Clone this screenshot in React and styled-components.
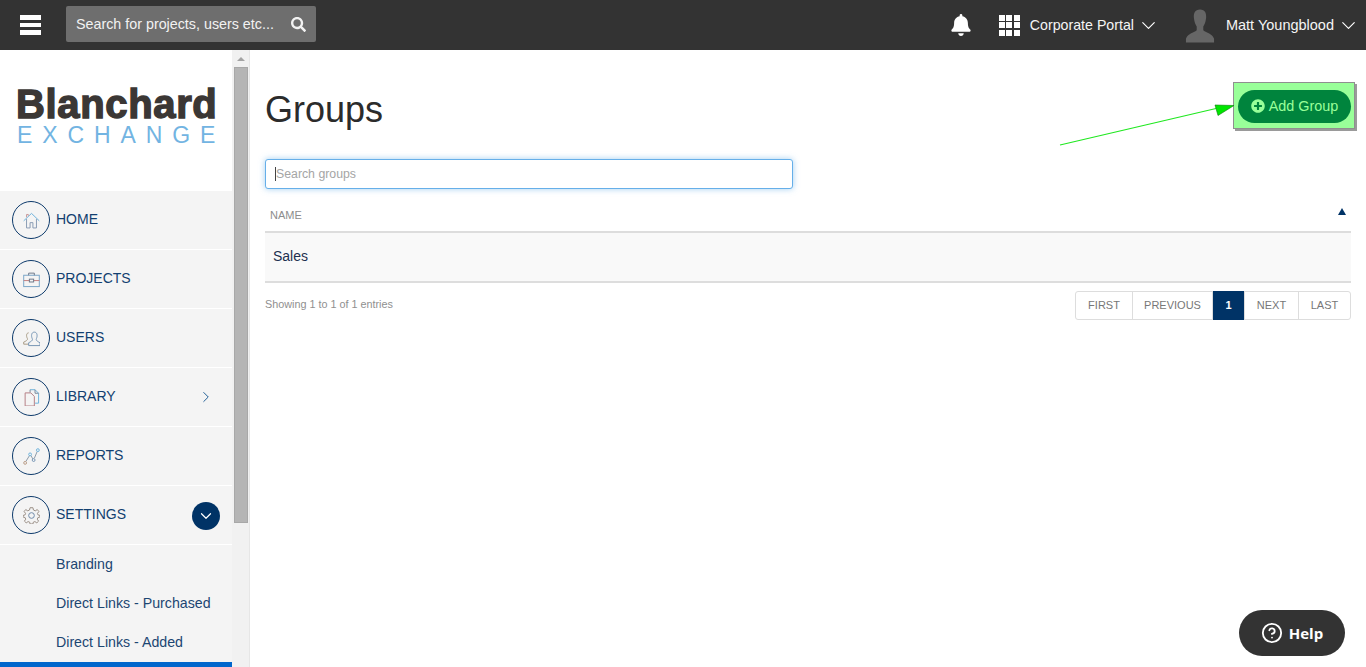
import React from 'react'
import styled, { createGlobalStyle } from 'styled-components'
import { FaSearch, FaBell, FaPlusCircle } from 'react-icons/fa'
import { ChevronDown, ChevronRight, CircleHelp } from 'lucide-react'

const menu = [
  {
    label: 'HOME',
    icon: (
      <>
        <path d="M1 12.500 L12 2 L23 12.500" stroke="#6fb3dc" />
        <path d="M5 10 V22.500 H10 V15 H14 V22.500 H19 V10" stroke="#8a9cb4" />
        <path d="M5 7.500 V3.500 H7.500 V5.500" stroke="#c99a9a" />
      </>
    ),
  },
  {
    label: 'PROJECTS',
    icon: (
      <>
        <rect x="1" y="6" width="22" height="16" stroke="#7aa6c8" />
        <path d="M8 6 V3 H16 V6" stroke="#6f7a8c" />
        <path d="M1 13.500 H9 M15 13.500 H23" stroke="#c47f7f" />
        <rect x="9" y="11.500" width="6" height="4" stroke="#6f7a8c" />
      </>
    ),
  },
  {
    label: 'USERS',
    icon: (
      <>
        <path d="M8 4 C4.500 4 4.500 9 6 11.500 C7 13.500 6 15 1 17 V20 H8" stroke="#a89c86" />
        <path d="M16 3 C11.500 3 11.500 9 13 12 C14 14 13 15.500 8 18 V22 H24 V18 C19 15.500 18 14 19 12 C20.500 9 20.500 3 16 3 Z" stroke="#7796b4" />
      </>
    ),
  },
  {
    label: 'LIBRARY',
    arrow: 'right',
    icon: (
      <>
        <path d="M10 1 H17 L22 6 V20 H17" stroke="#6fb3dc" />
        <path d="M10 1 V5 M17 1 V6 H22" stroke="#7a8a9c" />
        <path d="M3 5.500 H11 L16 10.500 V24 H3 Z" stroke="#b57f86" />
      </>
    ),
  },
  {
    label: 'REPORTS',
    icon: (
      <>
        <path d="M4 19 L9 11 M11 10.500 L14 15.500 M16 14.500 L20 5" stroke="#8c9aa8" />
        <circle cx="3" cy="21" r="2" stroke="#b89c86" />
        <circle cx="10" cy="9" r="2" stroke="#6fb3dc" />
        <circle cx="15" cy="17" r="2" stroke="#7796b4" />
        <circle cx="21" cy="3" r="2" stroke="#6fb3dc" />
      </>
    ),
  },
  {
    label: 'SETTINGS',
    arrow: 'down',
    icon: (
      <>
        <circle cx="12" cy="12" r="4" stroke="#6f8aa8" />
        <path
          d="M10 1 H14 L14.800 4.300 L17.300 5.400 L20.200 3.600 L22.400 6.400 L20.400 9 L21 11 L24 12 V14 L21 15 L20.200 17.200 L22 20 L19.500 22.400 L16.800 20.600 L14.600 21.400 L14 24 H10 L9.400 21.400 L7.200 20.600 L4.500 22.400 L2 20 L3.800 17.200 L3 15 L0 14 V12 L3 11 L3.600 9 L1.600 6.400 L3.800 3.600 L6.700 5.400 L9.200 4.300 Z"
          stroke="#9a8f86"
        />
      </>
    ),
  },
]

const subMenu = ['Branding', 'Direct Links - Purchased', 'Direct Links - Added']
const pages = [
  { label: 'FIRST', width: 57 },
  { label: 'PREVIOUS', width: 80 },
  { label: '1', width: 32 },
  { label: 'NEXT', width: 54 },
  { label: 'LAST', width: 51 },
]

export default function App() {
  return (
    <Page>
      <GlobalStyle />
      <TopBar>
        <Burger>
          <span />
          <span />
          <span />
        </Burger>
        <SearchBox>
          <span>Search for projects, users etc...</span>
          <FaSearch size={15} />
        </SearchBox>
        <TopRight>
          <BellWrap>
            <FaBell size={22} />
          </BellWrap>
          <AppGrid>
            {Array.from({ length: 9 }).map((_, i) => (
              <i key={i} />
            ))}
          </AppGrid>
          <TopLabel $size={14.2}>Corporate Portal</TopLabel>
          <TopChevron>
            <ChevronDown size={23} strokeWidth={1.2} />
          </TopChevron>
          <Avatar viewBox="0 0 32 36">
            <path d="M16 1 C10.500 1 9 5 9.500 10 C10 14 11 17 12.500 19 V23 C9 26 3 26.500 1 32 V36 H31 V32 C29 26.500 23 26 19.500 23 V19 C21 17 22 14 22.500 10 C23 5 21.500 1 16 1 Z" fill="#666" />
          </Avatar>
          <TopLabel $size={14.5}>Matt Youngblood</TopLabel>
          <TopChevron>
            <ChevronDown size={23} strokeWidth={1.2} />
          </TopChevron>
        </TopRight>
      </TopBar>

      <Body>
        <Sidebar>
          <Logo>
            <LogoTop>Blanchard</LogoTop>
            <LogoBottom>EXCHANGE</LogoBottom>
          </Logo>
          <Menu>
            {menu.map((item) => (
              <MenuRow key={item.label}>
                <Circle>
                  <svg viewBox="0 0 24 24" width="17" height="17" fill="none" strokeWidth="1.4">
                    {item.icon}
                  </svg>
                </Circle>
                <MenuLabel>{item.label}</MenuLabel>
                {item.arrow === 'right' && (
                  <RightArrow>
                    <ChevronRight size={18} strokeWidth={1.3} />
                  </RightArrow>
                )}
                {item.arrow === 'down' && (
                  <DownArrow>
                    <ChevronDown size={18} strokeWidth={1.6} />
                  </DownArrow>
                )}
              </MenuRow>
            ))}
            {subMenu.map((item) => (
              <SubRow key={item}>{item}</SubRow>
            ))}
            <SubRow $active />
          </Menu>
        </Sidebar>
        <Scrollbar>
          <ScrollUp />
          <ScrollThumb />
        </Scrollbar>

        <Main>
          <TitleRow>
            <Title>Groups</Title>
            <Highlight>
              <ArrowLine viewBox="0 0 180 45" width="180" height="45">
                <path d="M0 44 L156 7.500" stroke="#1fe81f" strokeWidth="1.1" fill="none" />
                <path d="M155 4 L174 4.500 L158 14.500 Z" fill="#00e600" stroke="#0a7a0a" strokeWidth="0.6" />
              </ArrowLine>
              <AddButton>
                <FaPlusCircle size={14} />
                <span>Add Group</span>
              </AddButton>
            </Highlight>
          </TitleRow>

          <SearchWrap>
            <SearchInput placeholder="Search groups" />
            <Caret />
          </SearchWrap>

          <TableHead>
            <span>NAME</span>
            <SortArrow />
          </TableHead>
          <TableRow>Sales</TableRow>

          <Footer>
            <Showing>Showing 1 to 1 of 1 entries</Showing>
            <Pager>
              {pages.map((p) => (
                <PageItem key={p.label} $width={p.width} $active={p.label === '1'}>
                  {p.label}
                </PageItem>
              ))}
            </Pager>
          </Footer>
        </Main>
      </Body>

      <HelpButton>
        <CircleHelp size={22} strokeWidth={2} />
        Help
      </HelpButton>
    </Page>
  )
}

const GlobalStyle = createGlobalStyle`
  html, body {
    margin: 0;
    height: 100%;
    overflow: hidden;
    background: #fff;
    font-family: "Liberation Sans", Arial, sans-serif;
  }
  * {
    box-sizing: border-box;
  }
`

const Page = styled.div`
  width: 1366px;
  height: 667px;
  display: flex;
  flex-direction: column;
  overflow: hidden;
  position: relative;
`

const TopBar = styled.header`
  height: 50px;
  flex: none;
  background: #333;
  display: flex;
  align-items: center;
  color: #fff;
  padding-left: 20px;
`

const Burger = styled.div`
  width: 21px;
  display: flex;
  flex-direction: column;
  gap: 3px;
  margin-right: 25px;

  & span {
    height: 4.67px;
    background: #fff;
  }
`

const SearchBox = styled.div`
  width: 250px;
  height: 36px;
  margin-top: -2px;
  background: #6e6e6e;
  border-radius: 2px;
  display: flex;
  align-items: center;
  justify-content: space-between;
  padding: 0 10px;
  font-size: 14.3px;
  color: #f2f2f2;
`

const TopRight = styled.div`
  margin-left: auto;
  display: flex;
  align-items: center;
  padding-right: 11px;
`

const BellWrap = styled.div`
  display: flex;
  margin-right: 27px;
`

const AppGrid = styled.div`
  width: 21px;
  height: 21px;
  display: grid;
  grid-template-columns: repeat(3, 1fr);
  grid-template-rows: repeat(3, 1fr);
  gap: 1.5px;
  margin-right: 10px;

  & i {
    background: #fff;
  }
`

const TopLabel = styled.span`
  margin-right: 8px;
  font-size: ${(p) => p.$size}px;
  color: #f5f5f5;
  white-space: nowrap;
`

const TopChevron = styled.span`
  width: 13px;
  height: 14px;
  display: flex;
  align-items: center;
  justify-content: center;

  & svg {
    flex: none;
  }
`

const Avatar = styled.svg`
  width: 30px;
  height: 35px;
  margin: 0 11px 0 30px;
`

const Body = styled.div`
  flex: 1;
  display: flex;
  min-height: 0;
`

const Sidebar = styled.aside`
  width: 232px;
  flex: none;
  display: flex;
  flex-direction: column;
  overflow: hidden;
`

const Logo = styled.div`
  height: 141px;
  flex: none;
  padding: 35px 0 0 16px;
  background: #fff;
`

const LogoTop = styled.div`
  font-size: 40px;
  line-height: 39px;
  font-weight: 700;
  letter-spacing: 0.65px;
  color: #3b3735;
  -webkit-text-stroke: 1.4px #3b3735;
`

const LogoBottom = styled.div`
  font-size: 23px;
  line-height: 22px;
  letter-spacing: 9.9px;
  color: #72b4e2;
  margin: 0 0 0 1px;
  white-space: nowrap;
`

const Menu = styled.nav`
  flex: 1;
  background: #f4f4f4;
`

const MenuRow = styled.div`
  height: 59px;
  display: flex;
  align-items: center;
  padding-left: 12px;
  border-bottom: 1px solid #fff;
  position: relative;
`

const Circle = styled.div`
  width: 38px;
  height: 38px;
  flex: none;
  border: 1.2px solid #0d3a6b;
  border-radius: 50%;
  display: flex;
  align-items: center;
  justify-content: center;
  background: #f4f4f4;
`

const MenuLabel = styled.span`
  margin: -2px 0 0 6px;
  font-size: 14px;
  color: #123f70;
`

const RightArrow = styled.span`
  display: flex;
  color: #1c5c94;
  margin-left: auto;
  margin-right: 17px;
`

const DownArrow = styled.span`
  width: 28px;
  height: 28px;
  border-radius: 50%;
  background: #003366;
  color: #fff;
  display: flex;
  align-items: center;
  justify-content: center;
  margin-left: auto;
  margin-right: 12px;
  margin-top: 2px;
`

const SubRow = styled.div`
  height: 39px;
  display: flex;
  align-items: center;
  padding: 0 0 2px 56px;
  font-size: 14.2px;
  color: #1c4672;
  background: ${(p) => (p.$active ? '#0066cc' : 'transparent')};
`

const Scrollbar = styled.div`
  width: 18px;
  flex: none;
  background: #f1f1f1;
  border-right: 1px solid #e6e6e6;
  display: flex;
  flex-direction: column;
  align-items: flex-start;
  padding: 7px 0 0 2px;
`

const ScrollUp = styled.div`
  margin-left: 3px;
  width: 0;
  height: 0;
  border-left: 4px solid transparent;
  border-right: 4px solid transparent;
  border-bottom: 4px solid #a3a3a3;
  margin-bottom: 6px;
`

const ScrollThumb = styled.div`
  width: 14px;
  height: 456px;
  background: #b5b5b5;
  border: 1px solid #a8a8a8;
`

const Main = styled.main`
  flex: 1;
  min-width: 0;
  padding: 32px 15px 0;
`

const TitleRow = styled.div`
  display: flex;
  justify-content: space-between;
  align-items: flex-start;
  margin-bottom: 30px;
`

const Title = styled.h1`
  margin: 9px 0 0;
  font-size: 36px;
  line-height: 38px;
  font-weight: 400;
  color: #2b2b2b;
`

const Highlight = styled.div`
  position: relative;
  height: 47px;
  margin-right: -4px;
  padding: 7px 3px 0 4px;
  background: #99ff99;
  border: 1px solid #8f8f8f;
  box-shadow: 2px 2px 0 #9a9a9a;
`

const ArrowLine = styled.svg`
  position: absolute;
  left: -174px;
  top: 18px;
  overflow: visible;
`

const AddButton = styled.button`
  height: 33px;
  width: 113px;
  border: 0;
  border-radius: 17px;
  background: #00843d;
  color: #99ff99;
  font-family: inherit;
  font-size: 14.4px;
  display: flex;
  align-items: center;
  justify-content: center;
  gap: 4px;
  padding: 0 0 2px;
`

const SearchWrap = styled.div`
  position: relative;
  width: 528px;
`

const SearchInput = styled.input`
  display: block;
  width: 100%;
  height: 30px;
  padding: 0 10px;
  border: 1px solid #66afe9;
  border-radius: 3px;
  outline: none;
  box-shadow: 0 0 6px rgba(102, 175, 233, 0.6);
  font-family: inherit;
  font-size: 12.3px;
  color: #333;

  &::placeholder {
    color: #a5a5a5;
    opacity: 1;
  }
`

const Caret = styled.i`
  position: absolute;
  left: 10px;
  top: 8px;
  width: 1px;
  height: 14px;
  background: #444;
`

const TableHead = styled.div`
  height: 45px;
  margin-top: -1px;
  display: flex;
  justify-content: space-between;
  align-items: center;
  padding: 10px 5px 0;
  font-size: 11px;
  color: #8d8d8d;
  border-bottom: 2px solid #ddd;
`

const SortArrow = styled.i`
  width: 0;
  height: 0;
  margin-top: -6px;
  border-left: 4.5px solid transparent;
  border-right: 4.5px solid transparent;
  border-bottom: 7px solid #003366;
`

const TableRow = styled.div`
  height: 50px;
  display: flex;
  align-items: center;
  padding: 0 0 2px 8px;
  background: #f9f9f9;
  border-bottom: 2px solid #ddd;
  font-size: 14px;
  color: #1d3050;
`

const Footer = styled.div`
  display: flex;
  justify-content: space-between;
  align-items: flex-start;
  margin-top: 8px;
`

const Showing = styled.span`
  font-size: 10.8px;
  line-height: 13px;
  margin-top: 7px;
  color: #8f8f8f;
`

const Pager = styled.ul`
  display: flex;
  margin: 0;
  padding: 0;
  list-style: none;
  height: 29px;
  border: 1px solid #ddd;
  border-radius: 3px;
`

const PageItem = styled.li`
  width: ${(p) => p.$width}px;
  display: flex;
  align-items: center;
  justify-content: center;
  margin: ${(p) => (p.$active ? '-1px 0' : '0')};
  padding-bottom: 2px;
  font-size: 11px;
  font-weight: ${(p) => (p.$active ? 700 : 400)};
  color: ${(p) => (p.$active ? '#fff' : '#777')};
  background: ${(p) => (p.$active ? '#003366' : 'transparent')};
  border-right: 1px solid #ddd;

  &:last-child {
    border-right: 0;
  }
`

const HelpButton = styled.button`
  position: absolute;
  left: 1239px;
  top: 610px;
  width: 106px;
  height: 46px;
  border: 0;
  border-radius: 23px;
  background: #333;
  color: #fff;
  font-family: "Open Sans", "Liberation Sans", sans-serif;
  font-size: 15px;
  font-weight: 700;
  display: flex;
  align-items: center;
  justify-content: center;
  gap: 6px;
  padding: 0;
`
